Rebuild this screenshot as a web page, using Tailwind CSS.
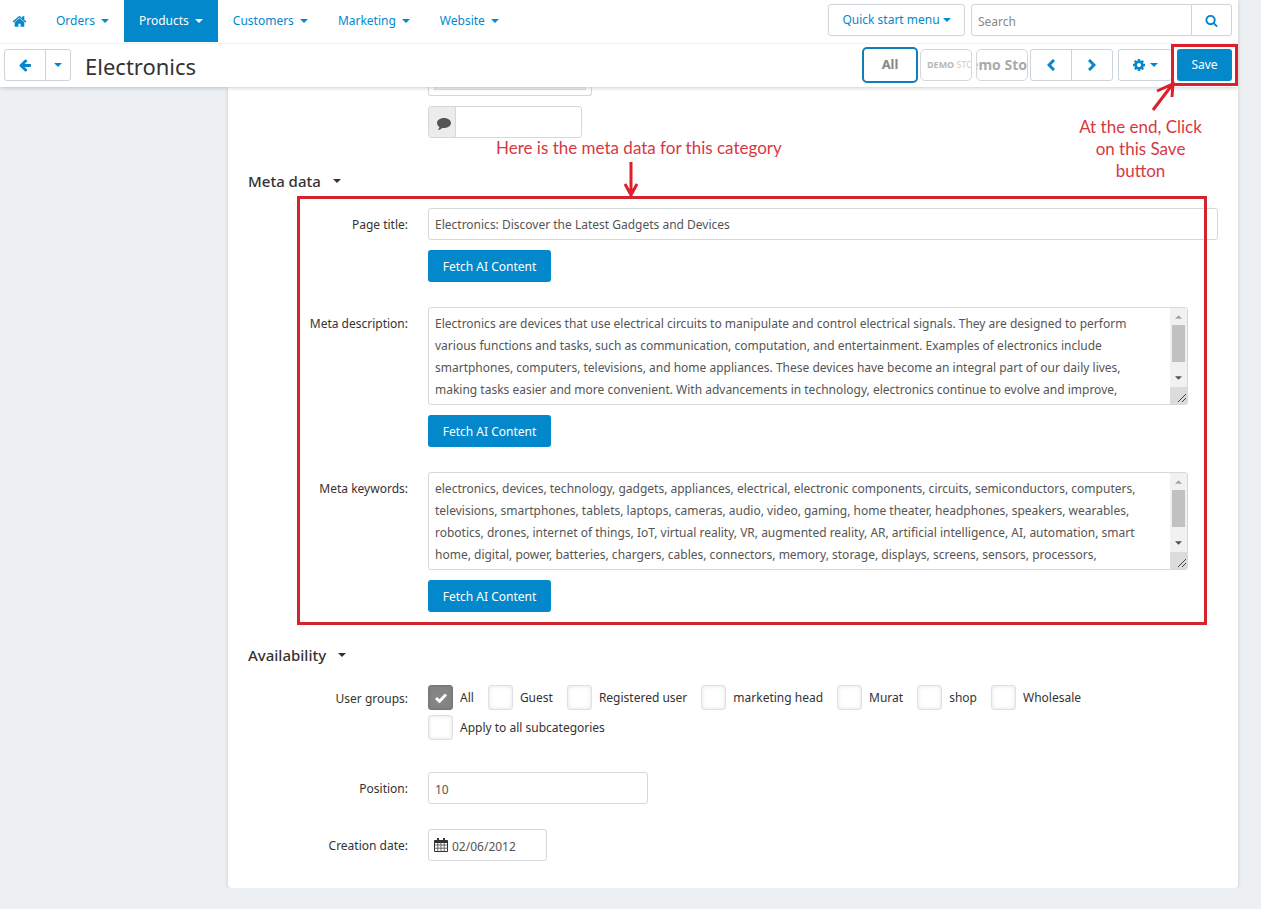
<!DOCTYPE html>
<html lang="en">
<head>
    <meta charset="UTF-8">
    <meta name="viewport" content="width=device-width, initial-scale=1.0">
    <title>Electronics - Categories</title>
    <script src="https://cdn.jsdelivr.net/npm/@tailwindcss/browser@4"></script>
</head>
<body class="bg-[#ecf0f3] font-['Noto_Sans',sans-serif] text-[12px] text-[#333] antialiased">
    <!-- Shared icons -->
    <svg class="hidden">
        <symbol id="caret" viewBox="0 0 8 4"><path d="M0 0h8L4 4z"/></symbol>
    </svg>

    <div class="mr-[23px]">
        <header class="relative z-10 bg-white shadow-[0_1px_4px_rgba(0,0,0,0.2)]">
            <!-- Main navigation -->
            <div class="flex h-11 justify-between border-b border-[#f3f3f3]">
                <nav class="flex h-[42px] text-[#0388cc]">
                    <a href="#" aria-label="Home" class="flex w-[41px] items-center pl-3">
                        <svg class="size-[15px]" fill="currentColor" viewBox="0 0 1792 1792"><path d="M1472 992v480q0 26-19 45t-45 19h-384v-384h-256v384h-384q-26 0-45-19t-19-45v-480q0-1 .5-3t.5-3l575-474 575 474q1 2 1 6zm223-69l-62 74q-8 9-21 11h-3q-13 0-21-7l-692-577-692 577q-12 8-24 7-13-2-21-11l-62-74q-8-10-7-23.5t11-21.5l719-599q32-26 76-26t76 26l244 204v-195q0-14 9-23t23-9h192q14 0 23 9t9 23v408l219 182q10 8 11 21.5t-7 23.5z"/></svg>
                    </a>
                    <a href="#" class="flex items-center gap-[6px] px-[15px]">Orders <svg class="h-1 w-2 fill-current"><use href="#caret"/></svg></a>
                    <a href="#" class="flex items-center gap-[6px] bg-[#0388cc] px-[15px] text-white">Products <svg class="h-1 w-2 fill-current"><use href="#caret"/></svg></a>
                    <a href="#" class="flex items-center gap-[6px] px-[15px]">Customers <svg class="h-1 w-2 fill-current"><use href="#caret"/></svg></a>
                    <a href="#" class="flex items-center gap-[6px] px-[15px]">Marketing <svg class="h-1 w-2 fill-current"><use href="#caret"/></svg></a>
                    <a href="#" class="flex items-center gap-[6px] px-[15px]">Website <svg class="h-1 w-2 fill-current"><use href="#caret"/></svg></a>
                </nav>
                <div class="flex gap-[6px] pt-1 pr-[6px]">
                    <button class="flex h-8 w-[137px] items-center justify-center gap-[3px] rounded-[3px] border border-[#ced5da] text-[#0388cc]">Quick start menu <svg class="h-1 w-2 fill-current"><use href="#caret"/></svg></button>
                    <form class="flex h-8 w-[261px] rounded-[3px] border border-[#ced5da]">
                        <input type="text" placeholder="Search" aria-label="Search" class="min-w-0 flex-1 px-[6px] pt-[3px] outline-none placeholder:text-[#888]">
                        <button type="button" aria-label="Search" class="flex w-10 items-center justify-center border-l border-[#ced5da] text-[#0388cc]">
                            <svg class="size-[13px]" fill="currentColor" viewBox="0 0 1792 1792"><path d="M1216 832q0-185-131.5-316.5t-316.5-131.5-316.5 131.5-131.5 316.5 131.5 316.5 316.5 131.5 316.5-131.5 131.5-316.5zm512 832q0 52-38 90t-90 38q-54 0-90-38l-343-342q-179 124-399 124-143 0-273.5-55.5t-225-150-150-225-55.5-273.5 55.5-273.5 150-225 225-150 273.5-55.5 273.5 55.5 225 150 150 225 55.5 273.5q0 220-124 399l343 343q37 37 37 90z"/></svg>
                        </button>
                    </form>
                </div>
            </div>

            <!-- Title and actions -->
            <div class="flex h-[43px] items-center pr-[6px] pb-[2px] pl-1">
                <div class="flex h-8 rounded-[3px] border border-[#ced5da] text-[#0388cc]">
                    <button aria-label="Back" class="flex w-10 items-center justify-center">
                        <svg class="size-[14px]" fill="currentColor" viewBox="0 0 1792 1792"><path d="M1664 896v128q0 53-32.5 90.5t-84.5 37.5h-704l293 294q38 36 38 90t-38 90l-75 76q-37 37-90 37-52 0-91-37l-651-652q-37-37-37-90 0-52 37-91l651-650q38-38 91-38 52 0 90 38l75 74q38 38 38 91t-38 91l-293 293h704q52 0 84.5 37.5t32.5 90.5z"/></svg>
                    </button>
                    <button aria-label="More pages" class="flex w-[25px] items-center justify-center border-l border-[#ced5da]"><svg class="h-1 w-2 fill-current"><use href="#caret"/></svg></button>
                </div>
                <h1 class="ml-[14px] pt-[2px] text-[22px] leading-8">Electronics</h1>

                <div class="ml-auto flex items-center">
                    <button class="h-9 w-14 rounded-[5px] border-2 border-[#0f80b5] text-[13px] font-bold text-[#888]">All</button>
                    <button class="ml-[2px] h-8 w-[52px] overflow-hidden rounded-[5px] border border-[#d3d7db] pl-[6px] text-left text-[9px] whitespace-nowrap text-[#ccc]"><b class="text-[#b8b8b8]">DEMO</b> STORE</button>
                    <button class="ml-1 flex h-8 w-[52px] items-center justify-end overflow-hidden rounded-[5px] border border-[#d3d7db] text-[14px] font-bold whitespace-nowrap text-[#aaa]">Demo Sto</button>
                    <div class="ml-[2px] flex h-8 rounded-[3px] border border-[#ced5da] text-[#0388cc]">
                        <button aria-label="Previous" class="flex w-10 items-center justify-center">
                            <svg class="h-3 w-2" fill="none" stroke="currentColor" stroke-width="3" viewBox="0 0 8 12"><path d="M7 1L2 6l5 5"/></svg>
                        </button>
                        <button aria-label="Next" class="flex w-[41px] items-center justify-center border-l border-[#ced5da]">
                            <svg class="h-3 w-2" fill="none" stroke="currentColor" stroke-width="3" viewBox="0 0 8 12"><path d="M1 1l5 5-5 5"/></svg>
                        </button>
                    </div>
                    <button aria-label="Settings" class="ml-[5px] flex h-8 w-[54px] items-center justify-center gap-1 rounded-[3px] border border-[#ced5da] text-[#0388cc]">
                        <svg class="size-[14px]" fill="currentColor" viewBox="0 0 1792 1792"><path d="M1152 896q0-106-75-181t-181-75-181 75-75 181 75 181 181 75 181-75 75-181zm512-109v222q0 12-8 23t-20 13l-185 28q-19 54-39 91 35 50 107 138 10 12 10 25t-9 23q-27 37-99 108t-94 71q-12 0-26-9l-138-108q-44 23-91 38-16 136-29 186-7 28-36 28h-222q-14 0-24.5-8.5t-11.5-21.5l-28-184q-49-16-90-37l-141 107q-10 9-25 9-14 0-25-11-126-114-165-168-7-10-7-23 0-12 8-23 15-21 51-66.5t54-70.5q-27-50-41-99l-183-27q-13-2-21-12.5t-8-23.5v-222q0-12 8-23t19-13l186-28q14-46 39-92-40-57-107-138-10-12-10-24 0-10 9-23 26-36 98.5-107.5t94.5-71.5q13 0 26 10l138 107q44-23 91-38 16-136 29-186 7-28 36-28h222q14 0 24.5 8.5t11.5 21.5l28 184q49 16 90 37l142-107q9-9 24-9 13 0 25 10 129 119 165 170 7 8 7 22 0 12-8 23-15 21-51 66.5t-54 70.5q26 50 41 98l183 28q13 2 21 12.5t8 23.5z"/></svg>
                        <svg class="h-1 w-2 fill-current"><use href="#caret"/></svg>
                    </button>
                    <div class="relative ml-[5px]">
                        <button class="block h-8 w-[55px] rounded-[3px] bg-[#0388cc] pt-px text-white">Save</button>
                        <div class="pointer-events-none absolute -top-[5px] -right-[6px] -bottom-[5px] -left-[6px] border-3 border-[#dc1f2a]"></div>
                        <svg class="absolute top-8 -left-[26px] h-8 w-6" fill="none" stroke="#dc1f2a" stroke-width="3" viewBox="0 0 24 32"><path d="M2 29L21 4M6 10L22 3L21 16"/></svg>
                        <p class="absolute top-[67px] right-5 w-[143px] text-center font-['Lato',sans-serif] text-[17px] leading-[22px] text-[#d8383f]">At the end, Click on this Save button</p>
                    </div>
                </div>
            </div>
        </header>

        <main class="relative ml-[228px] rounded-b-[3px] bg-white px-5 pb-[27px] shadow-[0_1px_4px_rgba(0,0,0,0.15)]">
            <!-- Localization -->
            <div class="pl-[180px]">
                <div class="h-[9px] w-[164px] rounded-b-[3px] border border-t-0 border-[#d3d8db] px-[5px]">
                    <div class="h-[3px] border border-t-0 border-[#dedede] bg-[#eee]"></div>
                </div>
                <div class="mt-[10px] flex h-8 w-[154px] overflow-hidden rounded-[3px] border border-[#d3d8db]">
                    <label for="comment" aria-label="Comment" class="flex w-[27px] items-center justify-center border-r border-[#d3d8db] bg-[#ececec] pt-[3px] pl-1">
                        <svg class="h-3 w-[14px]" fill="#555" viewBox="0 0 14 12"><path d="M7 0c3.900 0 7 2.200 7 5s-3.100 5-7 5c-.6 0-1.200 0-1.700-.1C4.200 11 2.800 11.700 1.300 11.900c-.3 0-.4-.3-.2-.5.7-.6 1.200-1.400 1.400-2.300C1 8.200 0 6.700 0 5c0-2.800 3.100-5 7-5z"/></svg>
                    </label>
                    <input id="comment" type="text" class="min-w-0 flex-1 px-[6px] outline-none">
                </div>
            </div>

            <!-- Meta data -->
            <h2 class="mt-[31px] mb-[15px] flex items-center gap-3 text-[15px] leading-6 font-medium">Meta data <svg class="h-1 w-2 fill-current"><use href="#caret"/></svg></h2>
            <div class="grid grid-cols-[160px_1fr] gap-x-5 gap-y-[25px]">
                <label for="page-title" class="pt-[5px] text-right leading-6">Page title:</label>
                <div>
                    <input id="page-title" type="text" value="Electronics: Discover the Latest Gadgets and Devices" class="block h-8 w-full rounded-[3px] border border-[#d3d8db] px-[6px] text-[#555] outline-none">
                    <button class="mt-[10px] block h-8 w-[123px] rounded-[3px] bg-[#0388cc] pt-px text-white">Fetch AI Content</button>
                </div>

                <label for="meta-description" class="pt-[5px] text-right leading-6">Meta description:</label>
                <div class="pr-[30px]">
                    <div class="relative">
                        <textarea id="meta-description" class="block h-[98px] w-full resize-none overflow-hidden rounded-[3px] border border-[#d3d8db] pt-[5px] pr-5 pl-[6px] leading-[22px] whitespace-pre text-[#555] outline-none">Electronics are devices that use electrical circuits to manipulate and control electrical signals. They are designed to perform
various functions and tasks, such as communication, computation, and entertainment. Examples of electronics include
smartphones, computers, televisions, and home appliances. These devices have become an integral part of our daily lives,
making tasks easier and more convenient. With advancements in technology, electronics continue to evolve and improve,</textarea>
                        <div class="absolute top-px right-px bottom-px flex w-[17px] flex-col items-center bg-[#f1f1f1]">
                            <svg class="mt-[7px] h-1 w-[7px]" fill="#a3a3a3" viewBox="0 0 8 4"><path d="M0 4h8L4 0z"/></svg>
                            <div class="mt-[6px] h-[37px] w-[13px] bg-[#c1c1c1]"></div>
                            <svg class="mt-[14px] h-1 w-[7px] fill-[#505050]"><use href="#caret"/></svg>
                            <svg class="mt-auto h-[17px] w-full bg-[#dcdcdc]" fill="none" stroke="#444" viewBox="0 0 17 17"><path d="M8 15l8-8M12 15l4-4"/></svg>
                        </div>
                    </div>
                    <button class="mt-[10px] block h-8 w-[123px] rounded-[3px] bg-[#0388cc] pt-px text-white">Fetch AI Content</button>
                </div>

                <label for="meta-keywords" class="pt-[5px] text-right leading-6">Meta keywords:</label>
                <div class="pr-[30px]">
                    <div class="relative">
                        <textarea id="meta-keywords" class="block h-[98px] w-full resize-none overflow-hidden rounded-[3px] border border-[#d3d8db] pt-[5px] pr-5 pl-[6px] leading-[22px] whitespace-pre text-[#555] outline-none">electronics, devices, technology, gadgets, appliances, electrical, electronic components, circuits, semiconductors, computers,
televisions, smartphones, tablets, laptops, cameras, audio, video, gaming, home theater, headphones, speakers, wearables,
robotics, drones, internet of things, IoT, virtual reality, VR, augmented reality, AR, artificial intelligence, AI, automation, smart
home, digital, power, batteries, chargers, cables, connectors, memory, storage, displays, screens, sensors, processors,</textarea>
                        <div class="absolute top-px right-px bottom-px flex w-[17px] flex-col items-center bg-[#f1f1f1]">
                            <svg class="mt-[7px] h-1 w-[7px]" fill="#a3a3a3" viewBox="0 0 8 4"><path d="M0 4h8L4 0z"/></svg>
                            <div class="mt-[6px] h-[37px] w-[13px] bg-[#c1c1c1]"></div>
                            <svg class="mt-[14px] h-1 w-[7px] fill-[#505050]"><use href="#caret"/></svg>
                            <svg class="mt-auto h-[17px] w-full bg-[#dcdcdc]" fill="none" stroke="#444" viewBox="0 0 17 17"><path d="M8 15l8-8M12 15l4-4"/></svg>
                        </div>
                    </div>
                    <button class="mt-[10px] block h-8 w-[123px] rounded-[3px] bg-[#0388cc] pt-px text-white">Fetch AI Content</button>
                </div>
            </div>

            <!-- Availability -->
            <h2 class="mt-[31px] mb-[18px] flex items-center gap-3 text-[15px] leading-6 font-medium">Availability <svg class="h-1 w-2 fill-current"><use href="#caret"/></svg></h2>
            <div class="grid grid-cols-[160px_1fr] gap-x-5">
                <span id="user-groups" class="pt-[2px] text-right leading-6">User groups:</span>
                <div role="group" aria-labelledby="user-groups" class="mb-8">
                    <div class="flex flex-wrap gap-x-[14px] gap-y-[5px]">
                        <label class="flex items-center gap-[7px]">
                            <span class="relative flex size-[25px] items-center justify-center">
                                <input type="checkbox" checked class="size-[25px] appearance-none rounded-[3px] border border-[#e0e0e0] shadow-[inset_0_0_4px_rgba(0,0,0,0.12)] checked:border-[#777] checked:bg-[#858585]">
                                <svg class="pointer-events-none absolute h-[10px] w-3" fill="none" stroke="#fff" stroke-width="3" viewBox="0 0 12 10"><path d="M1 5l3.500 3.300L11 1.500"/></svg>
                            </span>
                            All
                        </label>
                        <label class="flex items-center gap-[7px]"><input type="checkbox" class="size-[25px] appearance-none rounded-[3px] border border-[#e0e0e0] shadow-[inset_0_0_4px_rgba(0,0,0,0.12)]">Guest</label>
                        <label class="flex items-center gap-[7px]"><input type="checkbox" class="size-[25px] appearance-none rounded-[3px] border border-[#e0e0e0] shadow-[inset_0_0_4px_rgba(0,0,0,0.12)]">Registered user</label>
                        <label class="flex items-center gap-[7px]"><input type="checkbox" class="size-[25px] appearance-none rounded-[3px] border border-[#e0e0e0] shadow-[inset_0_0_4px_rgba(0,0,0,0.12)]">marketing head</label>
                        <label class="flex items-center gap-[7px]"><input type="checkbox" class="size-[25px] appearance-none rounded-[3px] border border-[#e0e0e0] shadow-[inset_0_0_4px_rgba(0,0,0,0.12)]">Murat</label>
                        <label class="flex items-center gap-[7px]"><input type="checkbox" class="size-[25px] appearance-none rounded-[3px] border border-[#e0e0e0] shadow-[inset_0_0_4px_rgba(0,0,0,0.12)]">shop</label>
                        <label class="flex items-center gap-[7px]"><input type="checkbox" class="size-[25px] appearance-none rounded-[3px] border border-[#e0e0e0] shadow-[inset_0_0_4px_rgba(0,0,0,0.12)]">Wholesale</label>
                    </div>
                    <label class="mt-[5px] flex items-center gap-[7px]"><input type="checkbox" class="size-[25px] appearance-none rounded-[3px] border border-[#e0e0e0] shadow-[inset_0_0_4px_rgba(0,0,0,0.12)]">Apply to all subcategories</label>
                </div>

                <label for="position" class="pt-[5px] text-right leading-6">Position:</label>
                <input id="position" type="text" value="10" class="mb-[25px] block h-8 w-[220px] rounded-[3px] border border-[#d3d8db] px-[6px] pt-[2px] text-[#555] outline-none">

                <label for="creation-date" class="pt-[5px] text-right leading-6">Creation date:</label>
                <div class="flex h-8 w-[119px] items-center gap-1 rounded-[3px] border border-[#d3d8db] pl-[5px]">
                    <svg class="h-[14px] w-[14px] shrink-0" fill="none" stroke="#333" viewBox="0 0 14 14"><path d="M.5 3.500h13v10H.5z"/><path stroke-width=".7" d="M.5 7h13M.5 10.200h13M3.800 5v8.500M7 5v8.500M10.200 5v8.500"/><path fill="#333" d="M.5 2.500h13v2H.5z"/><path stroke-width="2" d="M4 0v3M10 0v3"/></svg>
                    <input id="creation-date" type="text" value="02/06/2012" class="w-0 min-w-0 flex-1 pt-[3px] text-[#555] outline-none">
                </div>
            </div>

            <!-- Callout around the meta fields -->
            <div class="pointer-events-none absolute top-[109px] right-[31px] left-[69px] h-[429px] border-3 border-[#d2232e]"></div>
            <svg class="absolute top-[74px] left-[396px] h-9 w-[14px]" fill="none" stroke="#dc1f2a" stroke-width="3" viewBox="0 0 14 36"><path d="M7 1v33M1 23l6 11 6-11"/></svg>
            <p class="absolute top-[50px] left-[268px] font-['Lato',sans-serif] text-[17px] leading-[22px] whitespace-nowrap text-[#d8383f]">Here is the meta data for this category</p>
        </main>
    </div>
</body>
</html>
